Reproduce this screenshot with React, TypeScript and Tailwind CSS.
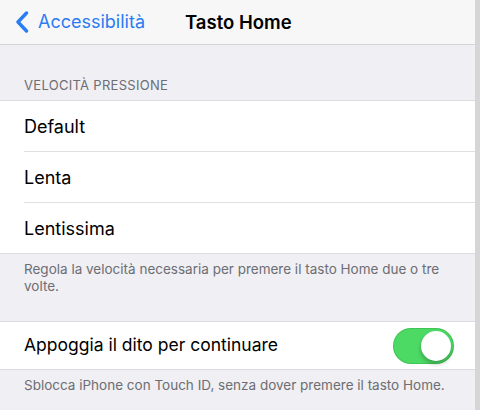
const speeds = ["Default", "Lenta", "Lentissima"];

function Toggle() {
  return (
    <div className="relative h-[34px] w-[59px] rounded-full bg-[#4cd964] ring-1 ring-[#3fc455]">
      <div className="absolute right-[2px] top-[2px] h-[30px] w-[30px] rounded-full bg-white shadow-[0_3px_4px_rgba(0,0,0,0.25)]" />
    </div>
  );
}

export default function App() {
  return (
    <div className="flex h-[410px] w-[480px] overflow-hidden font-['Inter',sans-serif]">
      <div className="flex w-[475px] flex-col bg-[#efeff4]">
        {/* nav bar */}
        <div className="relative flex h-[45px] items-center border-b border-[#d4d4d8] bg-[#f7f7f8]">
          <div className="flex items-center gap-[9px] pl-[15px] text-[#2a7cf2]">
            <svg width="14" height="22" viewBox="0 0 14 22" fill="none">
              <path d="M11.5 2 L3 11 L11.5 20" stroke="currentColor" strokeWidth="3.4" strokeLinecap="round" strokeLinejoin="round" />
            </svg>
            <span className="text-[18px] leading-none">Accessibilità</span>
          </div>
          <span className="absolute left-[185px] text-[18.5px] font-semibold leading-none text-black">Tasto Home</span>
        </div>

        <div className="px-[24px] pb-[8px] pt-[34px] text-[13px] leading-none tracking-[0.3px] text-[#6d6d72]">VELOCITÀ PRESSIONE</div>

        <div className="border-y border-[#dcdce0] bg-white">
          {speeds.map((s, i) => (
            <div key={s} className="pl-[24px]">
              <div className={`flex items-center text-[18px] text-black ${i < speeds.length - 1 ? "h-[51px] border-b border-[#e0e0e4]" : "h-[50px]"}`}>
                {s}
              </div>
            </div>
          ))}
        </div>

        <div className="px-[24px] pt-[7px] text-[13.5px] leading-[17px] text-[#6d6d72]">
          Regola la velocità necessaria per premere il tasto Home due o tre volte.
        </div>

        <div className="mt-[26px] flex h-[49px] items-center justify-between border-y border-[#dcdce0] bg-white pl-[24px] pr-[22px]">
          <span className="text-[17.5px] text-black">Appoggia il dito per continuare</span>
          <Toggle />
        </div>

        <div className="px-[24px] pt-[7px] text-[13.5px] leading-[17px] text-[#6d6d72]">
          Sblocca iPhone con Touch ID, senza dover premere il tasto Home.
        </div>
      </div>
      <div className="w-[5px] bg-[#d6d6d6]" />
    </div>
  );
}
